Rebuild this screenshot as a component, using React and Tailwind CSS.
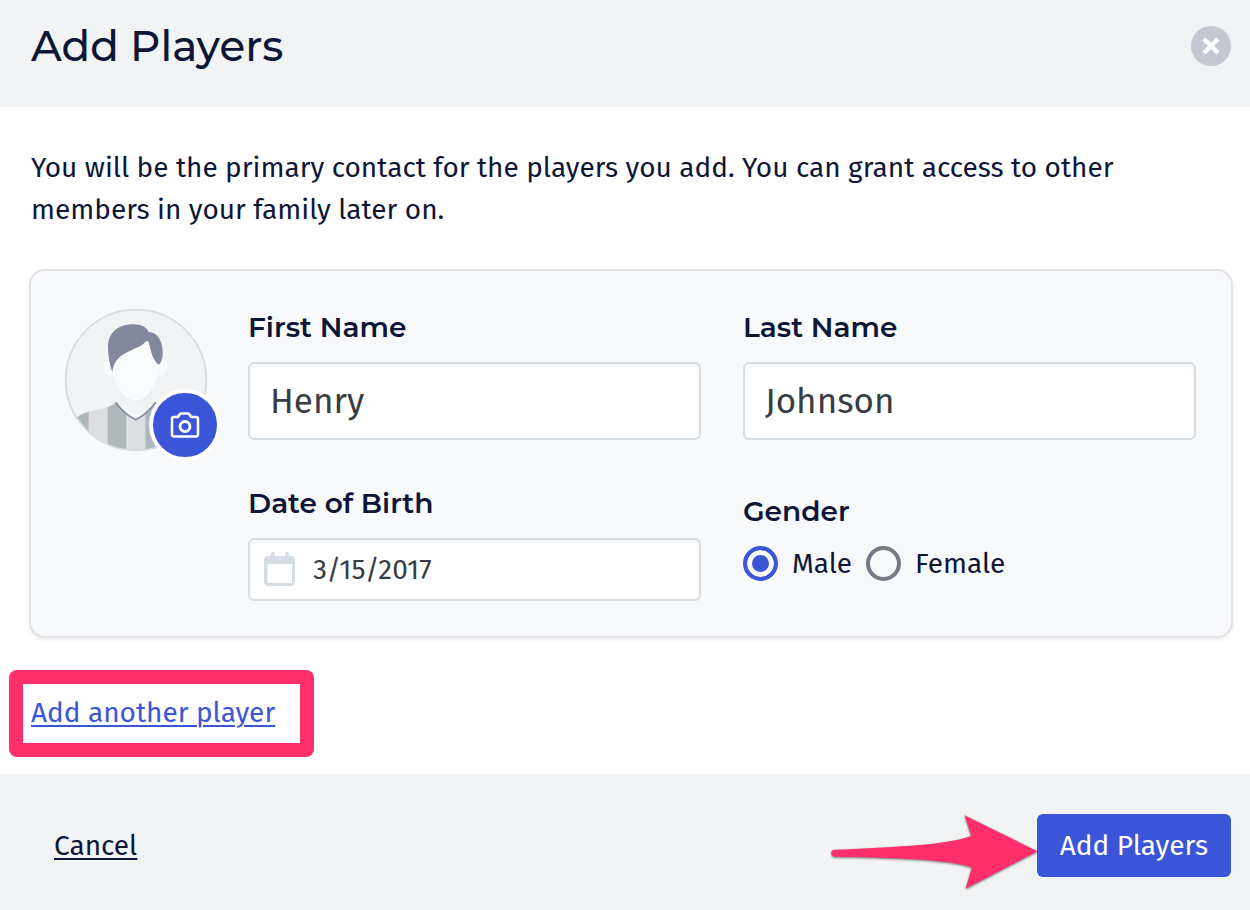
import { useState } from "react";

const headingFont = "font-[Montserrat,Inter,sans-serif]";
const bodyFont = "font-['Fira_Sans','Noto_Sans',sans-serif]";

const inputClassName = [
  "w-full rounded-md border-2 border-[#d5dce4] bg-white text-[#373d42]",
  "shadow-[inset_0_2px_4px_rgba(0,0,0,0.06)] outline-none focus:border-[#3b55d9]",
].join(" ");

const labelClassName = "block text-[28px] leading-[34px] font-semibold font-[Montserrat,Inter,sans-serif]";

const stripes = [
  { x: 60, fill: "#b0b7ba" },
  { x: 116, fill: "#dcdee0" },
  { x: 173, fill: "#b0b7ba" },
  { x: 229, fill: "#dcdee0" },
  { x: 286, fill: "#b0b7ba" },
  { x: 343, fill: "#dcdee0" },
  { x: 399, fill: "#b0b7ba" },
];

const Avatar = () => (
  <svg className="size-36" viewBox="42 38 432 432" role="img" aria-label="Player photo">
    <defs>
      <clipPath id="avatar-circle">
        <circle cx="258" cy="254" r="210" />
      </clipPath>
      <clipPath id="avatar-shirt">
        <path d="M70 374Q92 355 116 349C150 340 180 337 197 322Q224 361 257 373Q290 361 318 322C335 337 365 340 400 349Q424 355 446 374V470H60Z" />
      </clipPath>
      <linearGradient id="avatar-neck" x1="0" y1="0" x2="0" y2="1">
        <stop offset="0" stopColor="#eceef0" />
        <stop offset="0.5" stopColor="#eff1f2" />
        <stop offset="1" stopColor="#f9fafc" />
      </linearGradient>
    </defs>
    <circle cx="258" cy="254" r="211" fill="#f1f3f4" />
    <g clipPath="url(#avatar-circle)">
      <path d="M210 270H306V318Q306 324 318 325Q292 360 257 373Q224 360 197 325Q210 324 210 318Z" fill="url(#avatar-neck)" />
      <g clipPath="url(#avatar-shirt)">
        {stripes.map(({ x, fill }) => (
          <rect key={x} x={x} y="300" width="58" height="180" fill={fill} />
        ))}
      </g>
      <path d="M197 321Q222 357 257 373Q292 357 317 321" fill="none" stroke="#84889f" strokeWidth="5" />
      <path d="M180 192C166 186 160 198 162 213C164 232 174 243 187 243ZM334 192C349 186 355 198 353 213C351 232 341 243 328 243Z" fill="#fafbfd" />
      <path d="M184 150V215C188 268 228 316 257 316C288 316 323 268 331 205L326 150L290 110Z" fill="#fafbfd" />
      <path d="M187 231C178 205 174 180 174 155C174 112 205 87 250 87C274 87 290 96 296 110C324 110 339 140 338 175C338 189 334 200 326 209C305 190 303 165 295 138C291 136 288 137 285 141C274 154 260 157 241 166C206 182 190 198 187 231Z" fill="#84889f" />
    </g>
    <circle cx="258" cy="254" r="211" fill="none" stroke="#d8dae3" strokeWidth="5" />
  </svg>
);

const CameraIcon = () => (
  <svg className="h-[26px] w-[30px]" viewBox="0 0 30 26" fill="none" stroke="currentColor" strokeWidth="2.500" aria-hidden="true">
    <path d="M3.500 5H8L9.500 2.500Q10 1.500 11 1.500H18Q19 1.500 19.500 2.500L21 5H26Q28 5 28 7V22Q28 24.500 26 24.500H4Q2 24.500 2 22V7Q2 5 3.500 5Z" strokeLinejoin="round" />
    <circle cx="15" cy="14.500" r="5" strokeWidth="2.800" />
  </svg>
);

const CalendarIcon = () => (
  <svg
    className="pointer-events-none absolute left-4 top-[13px] h-9 w-8"
    viewBox="0 0 32 36"
    fill="#d5dce4"
    aria-hidden="true"
  >
    <path
      fillRule="evenodd"
      d="M7 3a2 2 0 0 1 4 0v2h10V3a2 2 0 0 1 4 0v2h2a4 4 0 0 1 4 4v22a4 4 0 0 1-4 4h-23a4 4 0 0 1-4-4V9a4 4 0 0 1 4-4H7ZM3.500 13v17.500a1.500 1.500 0 0 0 1.500 1.500h21.500a1.500 1.500 0 0 0 1.500-1.500V13Z"
    />
  </svg>
);

const Arrow = () => (
  <svg
    className="z-10 -mr-[3px] h-[78px] w-[210px] overflow-visible drop-shadow-[0_1px_1px_rgba(0,0,0,0.5)]"
    viewBox="30 55 630 235"
    aria-hidden="true"
  >
    <path
      d="M43 163C190 154 370 152 454 121L434 59L654 167L437 280L456 217C390 190 190 187 43 184A10 10 0 0 1 43 163Z"
      fill="#ff2f6c"
    />
  </svg>
);

const TextField = ({ id, label, value, onChange }) => (
  <div>
    <label className={labelClassName} htmlFor={id}>
      {label}
    </label>
    <input
      id={id}
      type="text"
      className={`mt-[18px] h-[78px] px-5 text-[35px] ${inputClassName}`}
      value={value}
      onChange={(event) => onChange(event.target.value)}
    />
  </div>
);

const GenderOption = ({ value, selected, onSelect }) => (
  <label className="flex items-center gap-[14px] text-[28px] leading-[35px]">
    <input
      type="radio"
      name="gender"
      className="size-[35px] shrink-0 appearance-none rounded-full border-4 border-[#757b84] bg-[#f8f9fb] checked:border-[#3b55d9] checked:bg-[#3b55d9] checked:shadow-[inset_0_0_0_5px_#f8f9fb]"
      value={value}
      checked={selected === value}
      onChange={() => onSelect(value)}
    />
    {value}
  </label>
);

export default function App() {
  const [firstName, setFirstName] = useState("Henry");
  const [lastName, setLastName] = useState("Johnson");
  const [birthDate, setBirthDate] = useState("3/15/2017");
  const [gender, setGender] = useState("Male");

  return (
    <div className={`flex min-h-screen flex-col bg-white text-[#0e1637] ${bodyFont}`}>
      <header className="flex items-start justify-between bg-[#f1f3f5] pb-[41px] pl-[31px] pr-[19px] pt-[26px]">
        <h1 className={`text-[42px] leading-10 font-medium ${headingFont}`}>Add Players</h1>
        <button
          type="button"
          className="flex size-10 items-center justify-center rounded-full bg-[#c3c8d1] text-white"
          aria-label="Close"
        >
          <svg className="size-[18px]" viewBox="0 0 18 18" stroke="currentColor" strokeWidth="4.500" aria-hidden="true">
            <path d="M2 2L16 16M16 2L2 16" />
          </svg>
        </button>
      </header>

      <main className="grow pb-4 pl-[29px] pr-[17px] pt-10">
        <p className="pl-0.5 text-[28px] leading-[42px]">
          You will be the primary contact for the players you add. You can grant access to other members in your family
          later on.
        </p>

        <section className="mt-[38px] flex gap-[40px] rounded-2xl border-2 border-[#e1e3e6] bg-[#f8f9fb] pb-[35px] pl-[33px] pr-[35px] pt-[37px] shadow-[0_2px_4px_rgba(0,0,0,0.08)]">
          <div className="relative size-36 shrink-0">
            <Avatar />
            <button
              type="button"
              className="absolute -bottom-[9px] -right-[13px] flex size-[72px] items-center justify-center rounded-full border-4 border-white bg-[#3b55d9] text-white"
              aria-label="Upload photo"
            >
              <CameraIcon />
            </button>
          </div>

          <div className="grid grow grid-cols-2 gap-x-[42px] gap-y-[46px] pt-[2px]">
            <TextField id="first-name" label="First Name" value={firstName} onChange={setFirstName} />
            <TextField id="last-name" label="Last Name" value={lastName} onChange={setLastName} />
            <div>
              <label className={labelClassName} htmlFor="birth-date">
                Date of Birth
              </label>
              <div className="relative mt-[18px]">
                <CalendarIcon />
                <input
                  id="birth-date"
                  type="text"
                  className={`h-[63px] pl-[63px] pr-4 text-[28px] ${inputClassName}`}
                  value={birthDate}
                  onChange={(event) => setBirthDate(event.target.value)}
                />
              </div>
            </div>
            <fieldset className="pt-2">
              <legend className={`float-left ${labelClassName}`}>Gender</legend>
              <div className="clear-both flex gap-[14px] pt-[18px]">
                <GenderOption value="Male" selected={gender} onSelect={setGender} />
                <GenderOption value="Female" selected={gender} onSelect={setGender} />
              </div>
            </fieldset>
          </div>
        </section>

        <div className="-ml-5 mt-8 w-fit rounded-lg bg-[#ff2f6c] p-[14px]">
          <div className="bg-white pb-[9px] pl-2 pr-[25px] pt-2">
            <a className="text-[28px] leading-[42px] text-[#3b55d9] underline decoration-2 underline-offset-3" href="#add">
              Add another player
            </a>
          </div>
        </div>
      </main>

      <footer className="flex items-start justify-between bg-[#f1f3f5] pb-[18px] pl-[54px] pr-[19px] pt-10">
        <button type="button" className="text-[28px] leading-[63px] underline decoration-2 underline-offset-3">
          Cancel
        </button>
        <div className="flex items-start">
          <Arrow />
          <button type="button" className="h-[63px] rounded-md bg-[#3b55d9] px-[23px] text-[28px] text-white">
            Add Players
          </button>
        </div>
      </footer>
    </div>
  );
}
